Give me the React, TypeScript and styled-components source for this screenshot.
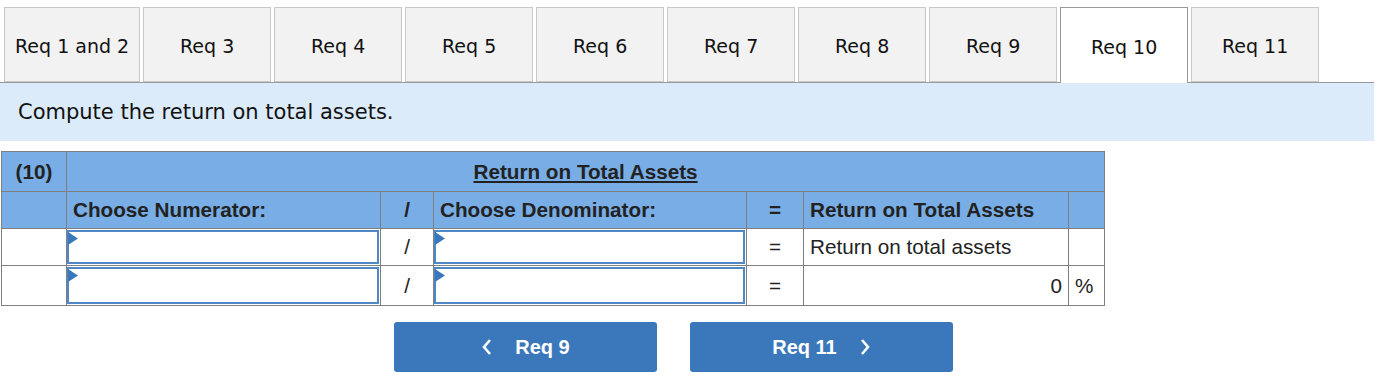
import React from 'react';
import styled, { createGlobalStyle } from 'styled-components';

const GlobalStyle = createGlobalStyle`
    body {
        margin: 0;
        background: white;
        font-family: "DejaVu Sans", Verdana, sans-serif;
    }
`;

const Page = styled.div`
    width: 1374px;
    padding-top: 7px;
`;

const TabBar = styled.div`
    display: flex;
    gap: 3px;
    padding-left: 4px;
    border-bottom: 1px solid #999;
    height: 75px;
`;

const Tab = styled.div<{ $active?: boolean }>`
    box-sizing: border-box;
    min-width: 128px;
    height: ${(p) => (p.$active ? '76px' : '75px')};
    padding: ${(p) => (p.$active ? '2px 10px 0' : '3px 10px 0')};
    display: flex;
    align-items: center;
    justify-content: center;
    font-size: 19px;
    color: #111;
    background: ${(p) => (p.$active ? 'white' : '#f2f2f2')};
    border: 1px solid ${(p) => (p.$active ? '#999' : '#c8c8c8')};
    border-bottom: ${(p) => (p.$active ? 'none' : '1px solid #c8c8c8')};
    position: relative;
    z-index: ${(p) => (p.$active ? 1 : 0)};
`;

const Instruction = styled.div`
    background: #dbebfa;
    height: 58px;
    padding-left: 18px;
    display: flex;
    align-items: center;
    font-size: 21px;
    color: #111;
`;

const Table = styled.table`
    margin: 10px 0 0 1px;
    border-collapse: collapse;
    font-family: "Liberation Sans", Arial, sans-serif;
    font-size: 20.7px;
    color: #222;
    table-layout: fixed;
    width: 1103px;
`;

const Cell = styled.td<{ $head?: boolean; $align?: string; $bold?: boolean }>`
    border: 1px solid #7f7f7f;
    background: ${(p) => (p.$head ? '#78ade5' : 'white')};
    font-weight: ${(p) => (p.$bold || p.$head ? 'bold' : 'normal')};
    text-align: ${(p) => p.$align || 'left'};
    padding: 0 6px;
    height: 36px;
`;

const InputCell = styled.td`
    border: 1px solid #7f7f7f;
    padding: 1px 1px 1px 0;
    height: 34px;
`;

const SelectBox = styled.div<{ $tall?: boolean }>`
    box-sizing: border-box;
    height: ${(p) => (p.$tall ? '37px' : '34px')};
    border: 2px solid #4f87c7;
    position: relative;
`;

const Flag = styled.svg`
    position: absolute;
    left: -1px;
    top: 0;
    width: 10px;
    height: 13px;
    display: block;
`;

const Title = styled.span`
    text-decoration: underline;
`;

const Nav = styled.div`
    display: flex;
    gap: 33px;
    padding: 16px 0 0 394px;
`;

const NavButton = styled.button`
    width: 263px;
    height: 50px;
    border: none;
    border-radius: 3px;
    background: #3b77bb;
    color: white;
    font-family: "Liberation Sans", Arial, sans-serif;
    font-weight: bold;
    font-size: 20px;
    display: flex;
    align-items: center;
    justify-content: center;
    gap: 22px;
`;

const Chevron: React.FC<{ dir: 'left' | 'right' }> = ({ dir }) => (
    <svg width="12" height="18" viewBox="0 0 12 18">
        <path
            d={dir === 'left' ? 'M9 2 L3 9 L9 16' : 'M3 2 L9 9 L3 16'}
            fill="none"
            stroke="white"
            strokeWidth="2.6"
        />
    </svg>
);

const Select: React.FC<{ tall?: boolean }> = ({ tall }) => (
    <SelectBox $tall={tall}>
        <Flag viewBox="0 0 10 13">
            <path d="M0 0 L10 6.5 L0 13 Z" fill="#3b78bb" />
        </Flag>
    </SelectBox>
);

const tabs = ['Req 1 and 2', 'Req 3', 'Req 4', 'Req 5', 'Req 6', 'Req 7', 'Req 8', 'Req 9', 'Req 10', 'Req 11'];

const App: React.FC = () => (
    <>
        <GlobalStyle />
        <Page>
            <TabBar>
                {tabs.map((t) => (
                    <Tab key={t} $active={t === 'Req 10'}>{t}</Tab>
                ))}
            </TabBar>
            <Instruction>Compute the return on total assets.</Instruction>
            <Table>
                <colgroup>
                    <col style={{ width: 65 }} />
                    <col style={{ width: 314 }} />
                    <col style={{ width: 53 }} />
                    <col style={{ width: 313 }} />
                    <col style={{ width: 57 }} />
                    <col style={{ width: 265 }} />
                    <col style={{ width: 36 }} />
                </colgroup>
                <tbody>
                    <tr>
                        <Cell $head $align="center" style={{ height: 39 }}>(10)</Cell>
                        <Cell $head $align="center" colSpan={6}><Title>Return on Total Assets</Title></Cell>
                    </tr>
                    <tr>
                        <Cell $head />
                        <Cell $head>Choose Numerator:</Cell>
                        <Cell $head $align="center">/</Cell>
                        <Cell $head>Choose Denominator:</Cell>
                        <Cell $head $align="center">=</Cell>
                        <Cell $head>Return on Total Assets</Cell>
                        <Cell $head />
                    </tr>
                    <tr>
                        <Cell />
                        <InputCell><Select /></InputCell>
                        <Cell $align="center">/</Cell>
                        <InputCell><Select /></InputCell>
                        <Cell $align="center">=</Cell>
                        <Cell>Return on total assets</Cell>
                        <Cell />
                    </tr>
                    <tr>
                        <Cell />
                        <InputCell><Select tall /></InputCell>
                        <Cell $align="center">/</Cell>
                        <InputCell><Select tall /></InputCell>
                        <Cell $align="center">=</Cell>
                        <Cell $align="right">0</Cell>
                        <Cell>%</Cell>
                    </tr>
                </tbody>
            </Table>
            <Nav>
                <NavButton><Chevron dir="left" />Req 9</NavButton>
                <NavButton>Req 11<Chevron dir="right" /></NavButton>
            </Nav>
        </Page>
    </>
);

export default App;
